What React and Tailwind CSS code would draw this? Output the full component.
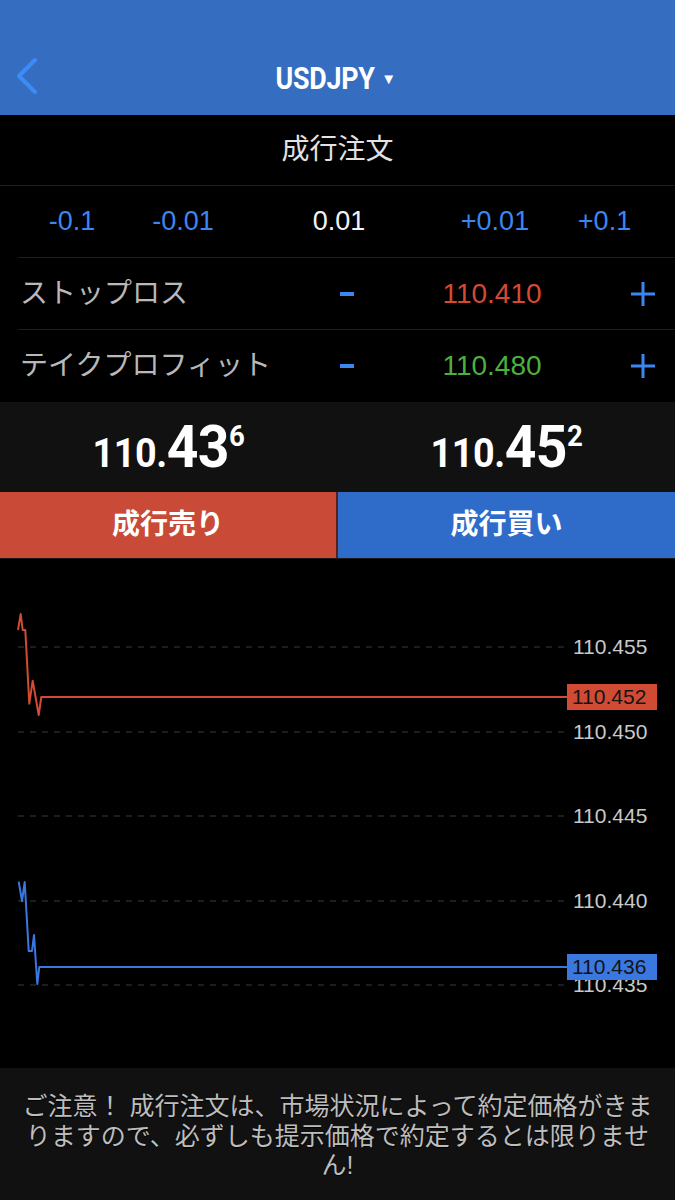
import React from "react";

const JP = { fontFamily: '"Liberation Sans", "Noto Sans CJK JP", sans-serif' };
const COND = { fontFamily: 'Roboto, "Liberation Sans", sans-serif' };

const steps = [
  { label: "-0.1", active: false },
  { label: "-0.01", active: false },
  { label: "0.01", active: true },
  { label: "+0.01", active: false },
  { label: "+0.1", active: false },
];

const grid = [
  { y: 88, v: "110.455" },
  { y: 173, v: "110.450" },
  { y: 257, v: "110.445" },
  { y: 342, v: "110.440" },
  { y: 426, v: "110.435" },
];

const askPts = "18,71 20.7,55 22.7,71 25.3,71 29.3,144.7 32.7,121.7 38.7,156 41.3,138 567,138";
const bidPts = "18.7,322.7 22,342 24.7,323 28.7,392 32,392 34,376 37.3,425 39.3,408 567,408";

function Minus() {
  return <div className="w-[14px] h-[4px] bg-[#3b86f0]" />;
}

function Plus() {
  return (
    <svg width="26" height="26" viewBox="0 0 26 26">
      <path d="M13 1v24M1 13h24" stroke="#3b86f0" strokeWidth="3" />
    </svg>
  );
}

function Price({ big, pip, sup }) {
  return (
    <div
      className="flex items-baseline text-white font-bold leading-none scale-x-[0.92] tracking-[-0.5px]"
      style={COND}
    >
      <span className="text-[41px]">{big}</span>
      <span className="text-[60px]">{pip}</span>
      <span className="text-[30px] self-start mt-[4px]">{sup}</span>
    </div>
  );
}

function Row({ label, value, color, border }) {
  return (
    <div className={border ? "border-b border-[#1c1c1c] ml-[18px]" : ""}>
      <div
        className={`grid grid-cols-[320px_54px_236px_65px] items-center ${
          border ? "-ml-[18px] h-[71px]" : "h-[72px]"
        }`}
      >
        <div className="pl-[20px] text-[28px] text-[#b8b8b8]">{label}</div>
        <div className="flex justify-center">
          <Minus />
        </div>
        <div className={`text-center text-[28px] ${color}`}>{value}</div>
        <div className="flex justify-center">
          <Plus />
        </div>
      </div>
    </div>
  );
}

export default function App() {
  return (
    <div className="w-[675px] h-[1200px] bg-black flex flex-col overflow-hidden" style={JP}>
      {/* HEADER */}
      <header className="h-[115px] bg-[#356ec0] pt-[40px] flex items-center relative shrink-0">
        <svg className="absolute left-[14px] top-[56px]" width="26" height="40" viewBox="0 0 26 40">
          <polyline
            points="21,4 5,20 21,36"
            fill="none"
            stroke="#3d8bf7"
            strokeWidth="4"
            strokeLinecap="round"
            strokeLinejoin="round"
          />
        </svg>
        <div className="flex-1 flex justify-center items-center gap-[6px] text-white pr-[4px]">
          <span
            className="text-[32px] font-bold inline-block scale-x-[0.84] -mx-[9px] tracking-[-0.3px]"
            style={COND}
          >
            USDJPY
          </span>
          <span className="text-[15px] mt-[4px]">▼</span>
        </div>
      </header>

      {/* TITLE */}
      <div className="h-[71px] flex items-center justify-center text-[28px] text-[#e2e2e2] border-b border-[#1c1c1c] shrink-0">
        成行注文
      </div>

      {/* STEPS */}
      <div className="h-[72px] shrink-0 border-b border-[#1c1c1c] ml-[18px]">
        <div className="grid grid-cols-[144px_78px_234px_78px_141px] items-center h-full -ml-[18px] text-[27px]">
          {steps.map((s) => (
            <div
              key={s.label}
              className={`text-center ${s.active ? "text-[#f2f2f2]" : "text-[#3b86f0]"}`}
            >
              {s.label}
            </div>
          ))}
        </div>
      </div>

      {/* STOP LOSS / TAKE PROFIT */}
      <div className="shrink-0">
        <Row label="ストップロス" value="110.410" color="text-[#d44a33]" border />
        <Row label="テイクプロフィット" value="110.480" color="text-[#4cb13c]" />
      </div>

      {/* PRICES */}
      <div className="h-[90px] bg-[#111111] grid grid-cols-2 items-center shrink-0">
        <div className="flex justify-center">
          <Price big="110." pip="43" sup="6" />
        </div>
        <div className="flex justify-center">
          <Price big="110." pip="45" sup="2" />
        </div>
      </div>

      {/* BUTTONS */}
      <div className="h-[67px] grid grid-cols-[336px_2px_337px] border-b border-[#1a1a1a] shrink-0">
        <button className="bg-[#c84a37] text-white text-[28px] font-bold">成行売り</button>
        <div className="bg-[#5a1f17]" />
        <button className="bg-[#2f6bc8] text-white text-[28px] font-bold">成行買い</button>
      </div>

      {/* CHART */}
      <div className="flex-1 min-h-0">
        <svg width="675" height="509" viewBox="0 0 675 509">
          {grid.map((g) => (
            <line
              key={g.v}
              x1="18"
              x2="564"
              y1={g.y}
              y2={g.y}
              stroke="#3a3a3a"
              strokeWidth="1"
              strokeDasharray="6 6"
            />
          ))}
          {grid.map((g) => (
            <text
              key={g.v + "t"}
              x="573"
              y={g.y + 7}
              fill="#c9c9c9"
              fontSize="21"
              fontFamily="Liberation Sans, sans-serif"
            >
              {g.v}
            </text>
          ))}
          <polyline points={askPts} fill="none" stroke="#d24b34" strokeWidth="2" strokeLinejoin="round" />
          <rect x="567" y="125" width="90" height="26" fill="#d04a34" />
          <text x="572" y="145" fill="#141414" fontSize="21" fontFamily="Liberation Sans, sans-serif">
            110.452
          </text>
          <polyline points={bidPts} fill="none" stroke="#3a78e0" strokeWidth="2" strokeLinejoin="round" />
          <rect x="567" y="395" width="90" height="26" fill="#3a78e0" />
          <text x="572" y="415" fill="#141414" fontSize="21" fontFamily="Liberation Sans, sans-serif">
            110.436
          </text>
        </svg>
      </div>

      {/* FOOTER */}
      <footer className="h-[132px] bg-[#111111] px-[18px] pt-[24px] text-center text-[25px] leading-[29.5px] text-[#bdbdbd] shrink-0 [text-shadow:0_1px_1px_rgba(0,0,0,0.9)]">
        ご注意！ 成行注文は、市場状況によって約定価格がきまりますので、必ずしも提示価格で約定するとは限りません!
      </footer>
    </div>
  );
}
